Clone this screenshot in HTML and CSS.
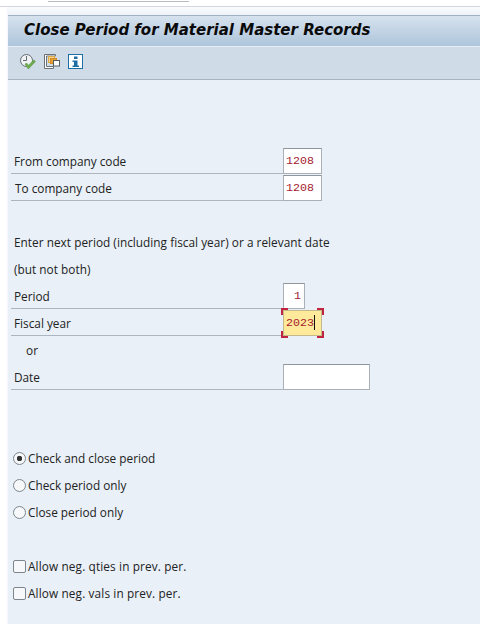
FILE: index.html
```html
<!DOCTYPE html>
<html lang="en">
<head>
    <meta charset="UTF-8">
    <meta name="viewport" content="width=device-width, initial-scale=1.0">
    <title>Close Period for Material Master Records</title>
    <link rel="stylesheet" href="styles.css">
</head>
<body>
    <div class="topstrip">
        <div class="cmdfield"></div>
    </div>

    <div class="window">
        <header class="titlebar">
            <h1>Close Period for Material Master Records</h1>
        </header>

        <div class="toolbar">
            <svg class="icon" width="16" height="16" viewBox="0 0 16 16">
                <circle cx="6.500" cy="6.500" r="6" fill="#eef2f5" stroke="#666d73" stroke-width="1"/>
                <path d="M6.500 2v4.500H3" fill="none" stroke="#666d73" stroke-width="1"/>
                <path d="M5 10l3.300 5 7.200-7.500-1.700-1.500-5.300 5.200-1.600-1.900z" fill="#6fae4e" stroke="#4c8a35" stroke-width=".5"/>
            </svg>
            <svg class="icon" width="16" height="16" viewBox="0 0 16 16">
                <path d="M.5.500h11v1.500H2.500v10.500h7v2h-9z" fill="#fff" stroke="#6b7277" stroke-width="1"/>
                <rect x="4.500" y="2.500" width="6" height="6" fill="#f6d58c" stroke="#dca84a" stroke-width="1"/>
                <rect x="6.500" y="4.500" width="6" height="5" fill="#eb9f32" stroke="#d08a26" stroke-width="1"/>
                <rect x="9.500" y="6.500" width="6" height="5.500" fill="#fff" stroke="#555c62" stroke-width="1"/>
            </svg>
            <svg class="icon" width="16" height="16" viewBox="0 0 16 16">
                <rect x=".5" y=".5" width="14" height="14" fill="#fff" stroke="#1c6ea4" stroke-width="1"/>
                <rect x="6" y="2.500" width="3.500" height="2.500" fill="#1c6ea4"/>
                <path d="M4.500 6.500h5v5h1.500v1.500h-6.500v-1.500h1.500V8H4.500z" fill="#1c6ea4"/>
            </svg>
        </div>

        <main class="form">
            <div class="row">
                <label class="label">From company code</label>
                <div class="field w39">1208</div>
            </div>
            <div class="row">
                <label class="label label-to">To company code</label>
                <div class="field w39">1208</div>
            </div>

            <div class="row gap1">
                <span class="text">Enter next period (including fiscal year) or a relevant date</span>
            </div>
            <div class="row">
                <span class="text">(but not both)</span>
            </div>

            <div class="row">
                <label class="label">Period</label>
                <div class="field w22 right">1</div>
            </div>
            <div class="row">
                <label class="label">Fiscal year</label>
                <div class="field w39 focused">2023<span class="caret"></span>
                    <span class="mark tl"></span><span class="mark tr"></span><span class="mark bl"></span><span class="mark br"></span>
                </div>
            </div>
            <div class="row">
                <span class="text or">or</span>
            </div>
            <div class="row">
                <label class="label">Date</label>
                <div class="field w86"></div>
            </div>

            <div class="row gap2 option">
                <span class="radio checked"></span><span>Check and close period</span>
            </div>
            <div class="row option">
                <span class="radio"></span><span>Check period only</span>
            </div>
            <div class="row option">
                <span class="radio"></span><span>Close period only</span>
            </div>

            <div class="row gap1 option">
                <span class="check"></span><span class="wide">Allow neg. qties in prev. per.</span>
            </div>
            <div class="row option">
                <span class="check"></span><span class="wide">Allow neg. vals in prev. per.</span>
            </div>
        </main>
    </div>
</body>
</html>
```

FILE: styles.css
```css
html, body {
    height: 100%;
}

body {
    margin: 0;
    background: #fff;
    color: #222;
    font-family: "Open Sans", "Noto Sans", sans-serif;
    font-size: 11.800px;
    overflow: hidden;
}

.topstrip {
    height: 6px;
    border-bottom: 1px solid #d3d6de;
}

.cmdfield {
    width: 141px;
    height: 1px;
    margin-left: 48px;
    background: #fff;
    border-bottom: 1px solid #b9bcc2;
}

.window {
    height: 617px;
    margin-left: 7px;
    padding-top: 8px;
    box-sizing: border-box;
    border-left: 1px solid #f4f7fb;
    background: linear-gradient(to bottom, #fafbfd 0, #eef3f9 8px, #e9f0f7 8px);
}

.titlebar {
    height: 31px;
    display: flex;
    align-items: center;
    padding: 0 0 3px 16px;
    border-top: 1px solid #9fb0c0;
    box-sizing: border-box;
    background: linear-gradient(to bottom, #d6e2ee, #aec5db);
}

.titlebar h1 {
    margin: 0;
    font-family: "DejaVu Sans", sans-serif;
    font-size: 15px;
    font-weight: bold;
    font-style: italic;
    color: #0a0a0a;
}

.toolbar {
    height: 34px;
    display: flex;
    align-items: center;
    gap: 8px;
    padding: 0 0 2px 12px;
    box-sizing: border-box;
    border-top: 1px solid #e4ecf3;
    border-bottom: 1px solid #a9b4bf;
    background: #cfdce7;
}

.form {
    padding: 67px 0 0 3px;
}

.row {
    height: 27px;
    display: flex;
    align-items: flex-end;
}

.gap1 {
    margin-top: 27px;
}

.gap2 {
    margin-top: 54px;
}

.label {
    width: 272px;
    height: 27px;
    line-height: 29px;
    padding-left: 3px;
    box-sizing: border-box;
    border-bottom: 1px solid #adb6bf;
}

.label-to {
    padding-left: 4px;
}

.text {
    height: 27px;
    line-height: 29px;
    padding-left: 3px;
    letter-spacing: .03px;
}

.or {
    padding-left: 15px;
}

.field {
    position: relative;
    height: 26px;
    line-height: 24px;
    padding: 0 2px;
    box-sizing: border-box;
    background: #fff;
    border: 1px solid #a9b0b7;
    border-top-color: #8f969c;
    font-family: "Liberation Mono", monospace;
    font-size: 11.670px;
    color: #a5202e;
    white-space: nowrap;
}

.w22 {
    width: 22px;
}

.w39 {
    width: 39px;
}

.w86 {
    width: 87px;
}

.right {
    text-align: right;
    padding-right: 3px;
}

.focused {
    background: #ffe99a;
    border-color: #c4b98a;
}

.caret {
    display: inline-block;
    width: 1px;
    height: 15px;
    vertical-align: middle;
    background: #111;
}

.mark {
    position: absolute;
    width: 7px;
    height: 7px;
    box-sizing: border-box;
    border: 0 solid #bf2440;
}

.tl { top: -3px; left: -3px; border-width: 2px 0 0 2px; }
.tr { top: -3px; right: -3px; border-width: 2px 2px 0 0; }
.bl { bottom: -3px; left: -3px; border-width: 0 0 2px 2px; }
.br { bottom: -3px; right: -3px; border-width: 0 2px 2px 0; }

.option {
    align-items: center;
    gap: 2px;
    padding-left: 2px;
}

.wide {
    letter-spacing: .13px;
}

.radio {
    width: 13px;
    height: 13px;
    margin-top: 1px;
    box-sizing: border-box;
    border: 1px solid #7d868e;
    border-radius: 50%;
    background: #f6f8fa;
}

.radio.checked {
    background: radial-gradient(circle, #333 0 2.500px, #f6f8fa 3px);
}

.check {
    width: 13px;
    height: 13px;
    margin-top: 1px;
    box-sizing: border-box;
    border: 1px solid #7d868e;
    border-radius: 2px;
    background: #f6f8fa;
}
```
